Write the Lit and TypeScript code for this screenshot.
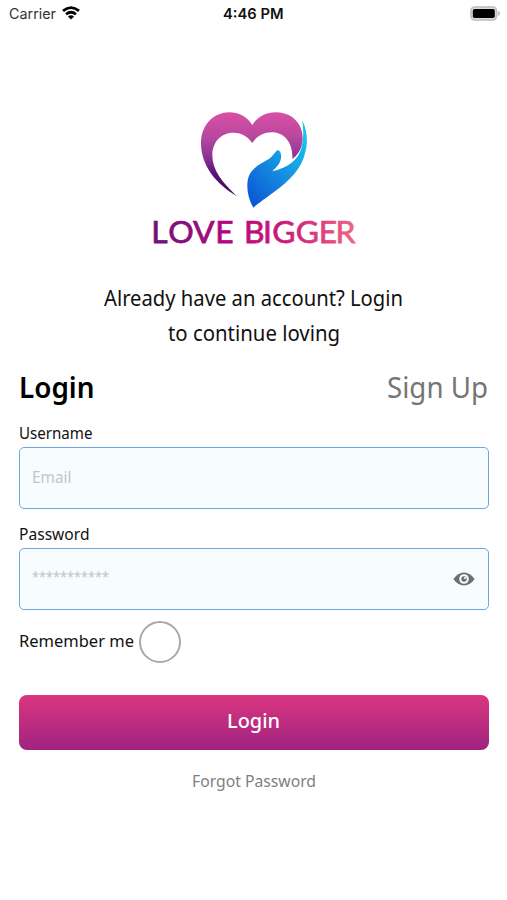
import { LitElement, html, svg, css } from "lit";
import { customElement, property } from "lit/decorators.js";

/** One line of text fitted to a given advance width. */
@customElement("fit-text")
export class FitText extends LitElement {
  @property() text = "";
  @property({ type: Number }) width = 100;
  @property({ type: Number }) height = 24;
  @property({ type: Number }) baseline = 18;

  static styles = css`
    :host { display: block; flex: none; }
    svg { display: block; overflow: visible; }
    text { fill: currentColor; }
  `;

  render() {
    return html`<svg width=${this.width} height=${this.height}>
      ${svg`<text x="0" y=${this.baseline} textLength=${this.width} lengthAdjust="spacingAndGlyphs">${this.text}</text>`}
    </svg>`;
  }
}

@customElement("status-bar")
export class StatusBar extends LitElement {
  static styles = css`
    :host {
      display: grid;
      grid-template-columns: 1fr auto 1fr;
      align-items: center;
      height: 28px;
      padding: 0 7px 0 9px;
      box-sizing: border-box;
      font-family: Inter, "Liberation Sans", sans-serif;
      font-size: 14.3px;
      color: #111;
    }
    .left { display: flex; align-items: center; gap: 6px; color: #333; }
    .left svg { margin-bottom: 2px; }
    .time { font-weight: 600; margin-right: 2px; }
    .battery { justify-self: end; margin-bottom: 2px; }
    svg { display: block; }
  `;

  render() {
    return html`
      <div class="left">
        <fit-text text="Carrier" width="47" height="28" baseline="19"></fit-text>
        <svg width="18" height="14" viewBox="0 0 18 14" fill="none" stroke="#000" stroke-width="2.7">
          <path d="M1 4.9Q9-1.8 17 4.9" />
          <path d="M4 8.3Q9 4.2 14 8.3" />
          <path d="M9 13.6L5.9 10.4Q9 8 12.1 10.4Z" fill="#000" stroke="none" />
        </svg>
      </div>
      <fit-text class="time" text="4:46 PM" width="60.5" height="28" baseline="19"></fit-text>
      <svg class="battery" width="30" height="15" viewBox="0 0 30 15">
        <rect x="1" y="1" width="25.5" height="13" rx="3.8" fill="#ddd" stroke="#bcbcbc" stroke-width="1.6" />
        <rect x="2.8" y="3" width="22" height="9" rx="1.8" fill="#000" />
        <path d="M28 5Q30 5.6 30 7.5T28 10Z" fill="#bcbcbc" />
      </svg>
    `;
  }
}

@customElement("brand-logo")
export class BrandLogo extends LitElement {
  static styles = css`
    :host { display: flex; flex-direction: column; align-items: center; }
    svg { display: block; overflow: visible; }
    .mark { margin-left: 2px; }
    .word { font: 400 31.8px Lato, "Open Sans", sans-serif; stroke-width: 0.75px; }
  `;

  render() {
    return html`
      <svg class="mark" width="130" height="115" viewBox="0 0 390 345">
        <defs>
          <linearGradient id="heart" gradientUnits="userSpaceOnUse" x1="0" y1="37" x2="0" y2="288">
            <stop offset="0" stop-color="#d850a5" />
            <stop offset="0.3" stop-color="#b8479f" />
            <stop offset="0.52" stop-color="#8f3596" />
            <stop offset="0.74" stop-color="#5a1278" />
            <stop offset="1" stop-color="#3d0c60" />
          </linearGradient>
          <linearGradient id="hand" x1="0.85" y1="0.1" x2="0.15" y2="1">
            <stop offset="0" stop-color="#14c4ee" />
            <stop offset="0.45" stop-color="#1593e2" />
            <stop offset="1" stop-color="#0c58d4" />
          </linearGradient>
        </defs>
        <path fill="url(#heart)" d="M187 75C170 48 145 37 118 37C68 37 33 78 33 130C33 200 82 255 140 288C96 247 67 210 67 166C67 122 97 98 131 98C156 98 175 111 187 129C200 109 220 97 246 97C282 97 310 128 307 177Q332 158 337 128C345 78 310 37 258 37C226 37 202 51 187 75Z" />
        <path fill="url(#hand)" d="M337 62C351 88 354 125 347 152C337 205 299 241 252 276C225 296 205 310 190 323C176 299 169 270 173 242C178 209 205 195 230 181C250 170 253 156 264 150C277 156 277 181 262 198C256 205 250 210 247 214C295 203 324 181 334 145C341 119 341 91 337 62Z" />
      </svg>
      <svg width="201" height="37">
        <defs>
          <linearGradient id="word" gradientUnits="userSpaceOnUse" x1="0" y1="0" x2="201" y2="0">
            <stop offset="0" stop-color="#6b1478" />
            <stop offset="0.38" stop-color="#b5087c" />
            <stop offset="0.65" stop-color="#ca1b7b" />
            <stop offset="1" stop-color="#ee6285" />
          </linearGradient>
        </defs>
        <g class="word" fill="url(#word)" stroke="url(#word)">
          <text x="-1.7 15.2 40 62.2" y="27.6">LOVE</text>
          <text x="91 110 119.3 142.8 165.7 182.4" y="27.6">BIGGER</text>
        </g>
      </svg>
    `;
  }
}

@customElement("app-root")
export class AppRoot extends LitElement {
  static styles = css`
    :host {
      display: block;
      height: 900px;
      overflow: hidden;
      background: #fff;
      color: #111;
      font-family: "Noto Sans", "Open Sans", sans-serif;
      font-size: 16.5px;
    }
    brand-logo { padding-top: 72px; }
    .intro {
      display: flex;
      flex-direction: column;
      align-items: center;
      padding-top: 28px;
      font-size: 21px;
    }
    .form { display: flex; flex-direction: column; padding: 16px 18px 0 19px; }
    .tabs {
      display: flex;
      justify-content: space-between;
      padding: 0 1px 0 0;
      height: 54px;
      font-size: 28.5px;
    }
    .active { font-weight: 600; color: #000; }
    .inactive { color: #757575; }
    .field {
      display: flex;
      align-items: center;
      justify-content: space-between;
      box-sizing: border-box;
      height: 62px;
      padding: 0 13px 0 12px;
      border: 1.5px solid #70a5df;
      border-radius: 5px;
      background: #f7fdff;
      color: #c0c6c8;
    }
    .second { margin-top: 13px; }
    .stars { font-size: 14px; }
    .remember { display: flex; align-items: center; gap: 5px; margin-top: 10px; height: 43px; }
    .check {
      box-sizing: border-box;
      width: 42px;
      height: 42px;
      border: 2.4px solid #a9a9a9;
      border-radius: 50%;
    }
    .button {
      display: flex;
      justify-content: center;
      height: 55px;
      margin-top: 32px;
      border-radius: 8px;
      background: linear-gradient(#db367f, #9f2380);
      color: #fff;
      font-size: 20.5px;
      font-weight: 500;
    }
    .button fit-text { margin-right: 2px; }
    .forgot { display: flex; justify-content: center; color: #808080; }
  `;

  render() {
    return html`
      <status-bar></status-bar>
      <brand-logo></brand-logo>
      <div class="intro">
        <fit-text text="Already have an account? Login" width="299" height="35" baseline="26"></fit-text>
        <fit-text text="to continue loving" width="172" height="35" baseline="26"></fit-text>
      </div>
      <div class="form">
        <div class="tabs">
          <fit-text class="active" text="Login" width="75.5" height="54" baseline="32"></fit-text>
          <fit-text class="inactive" text="Sign Up" width="101" height="54" baseline="32"></fit-text>
        </div>
        <fit-text text="Username" width="73.5" height="27" baseline="18.5"></fit-text>
        <div class="field">
          <fit-text text="Email" width="39.5" height="60" baseline="35"></fit-text>
        </div>
        <fit-text class="second" text="Password" width="70.5" height="26" baseline="17.5"></fit-text>
        <div class="field">
          <fit-text class="stars" text="***********" width="77" height="60" baseline="33"></fit-text>
          <svg width="22" height="14" viewBox="0 0 22 14">
            <path d="M.4 7Q5 .5 11 .5T21.6 7Q17 13.5 11 13.5T.4 7Z" fill="#6b6f70" />
            <circle cx="11" cy="7" r="4.8" fill="#f7fdff" />
            <circle cx="11" cy="7" r="2.7" fill="#6b6f70" />
            <circle cx="12" cy="6" r="1.1" fill="#f7fdff" />
          </svg>
        </div>
        <div class="remember">
          <fit-text text="Remember me" width="115" height="43" baseline="27"></fit-text>
          <span class="check"></span>
        </div>
        <div class="button">
          <fit-text text="Login" width="53" height="55" baseline="33"></fit-text>
        </div>
        <div class="forgot">
          <fit-text text="Forgot Password" width="124" height="60" baseline="37"></fit-text>
        </div>
      </div>
    `;
  }
}
